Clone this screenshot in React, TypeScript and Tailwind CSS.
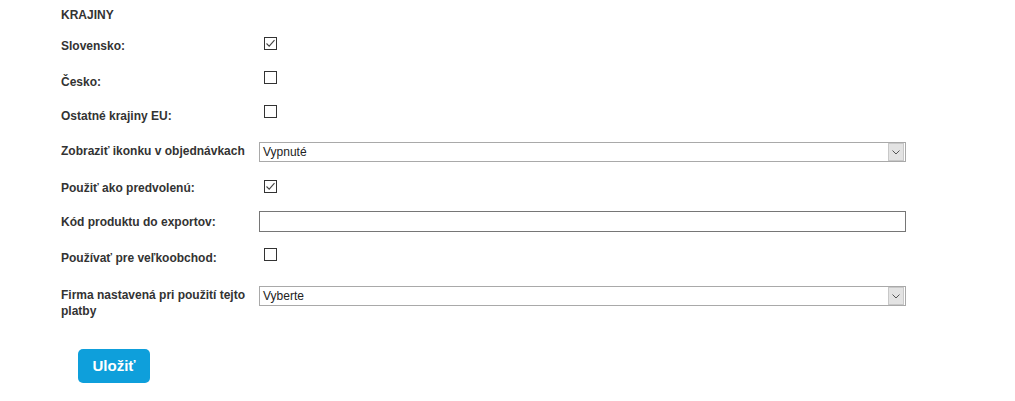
import type { ReactNode } from "react";

const Checkbox = ({ checked }: { checked?: boolean }) => (
  <span className="ml-[5px] flex h-[13px] w-[13px] items-center justify-center border border-[#333] bg-white">
    {checked && (
      <svg width="11" height="11" viewBox="0 0 11 11" fill="none">
        <path d="M1.5 5.5 L4.2 8.2 L9.5 2.2" stroke="#444" strokeWidth="1.1" />
      </svg>
    )}
  </span>
);

const Select = ({ value }: { value: string }) => (
  <div className="flex h-[20px] w-[647px] items-center justify-between border border-[#a9a9a9] bg-white">
    <span className="pl-[3px] text-[12px] text-[#222]">{value}</span>
    <span className="mr-px flex h-[18px] w-[16px] items-center justify-center border border-[#c8c8c8] bg-[#e3e3e3]">
      <svg width="8" height="5" viewBox="0 0 8 5" fill="none">
        <path d="M0.5 0.5 L4 4 L7.5 0.5" stroke="#555" strokeWidth="1" />
      </svg>
    </span>
  </div>
);

type Row = {
  label: string;
  height: string;
  labelPad: string;
  control: ReactNode;
};

// row heights follow the spacing in the original form
const rows: Row[] = [
  { label: "Slovensko:", height: "h-[34px]", labelPad: "pt-px", control: <Checkbox checked /> },
  { label: "Česko:", height: "h-[34px]", labelPad: "pt-[3px]", control: <Checkbox /> },
  { label: "Ostatné krajiny EU:", height: "h-[37px]", labelPad: "pt-[3px]", control: <Checkbox /> },
  { label: "Zobraziť ikonku v objednávkach", height: "h-[38px]", labelPad: "pt-px", control: <Select value="Vypnuté" /> },
  { label: "Použiť ako predvolenú:", height: "h-[31px]", labelPad: "pt-0", control: <Checkbox checked /> },
  {
    label: "Kód produktu do exportov:",
    height: "h-[37px]",
    labelPad: "pt-[3px]",
    control: <div className="h-[21px] w-[647px] border border-[#767676] bg-white" />,
  },
  { label: "Používať pre veľkoobchod:", height: "h-[38px]", labelPad: "pt-[2px]", control: <Checkbox /> },
  { label: "Firma nastavená pri použití tejto platby", height: "h-[63px]", labelPad: "pt-px", control: <Select value="Vyberte" /> },
];

export default function App() {
  return (
    <div className="h-[401px] w-[1015px] bg-white pl-[61px] font-['Liberation_Sans',Arial,sans-serif] text-[#333]">
      <div className="h-[37px] pt-[7px] text-[12px] font-bold leading-[16px]">KRAJINY</div>
      {rows.map((r) => (
        <div key={r.label} className={`flex items-start ${r.height}`}>
          <div className={`w-[198px] pr-[8px] text-[12px] font-bold leading-[16px] ${r.labelPad}`}>{r.label}</div>
          {r.control}
        </div>
      ))}
      <button className="ml-[17px] h-[34px] w-[72px] rounded-[5px] bg-[#0e9fdb] text-[15px] font-bold text-white">
        Uložiť
      </button>
    </div>
  );
}
